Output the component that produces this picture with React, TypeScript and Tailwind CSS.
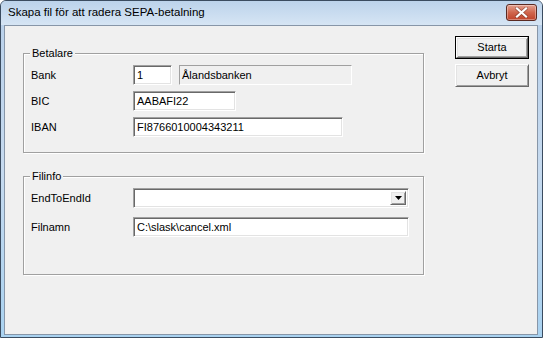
import React from "react";

const sunken =
  "border border-t-[#a0a0a0] border-l-[#a0a0a0] border-r-white border-b-white shadow-[inset_1px_1px_0_#696969,inset_-1px_-1px_0_#e3e3e3]";
const raised =
  "border border-t-white border-l-white border-r-[#696969] border-b-[#696969] shadow-[inset_1px_1px_0_#e3e3e3,inset_-1px_-1px_0_#a0a0a0]";

const Row = ({ label, children, className = "" }: { label: string; children: React.ReactNode; className?: string }) => (
  <div className={`flex items-center h-[20px] ${className}`}>
    <div className="w-[102px] shrink-0">{label}</div>
    {children}
  </div>
);

const Group = ({ title, className, children }: { title: string; className: string; children: React.ReactNode }) => (
  <div
    className={`relative w-[401px] border border-[#a0a0a0] shadow-[1px_1px_0_white,inset_1px_1px_0_white] pl-[7px] pt-[11px] ${className}`}
  >
    <span className="absolute left-[6px] -top-[7px] px-[2px] bg-[#f0f0f0] leading-[13px]">{title}</span>
    {children}
  </div>
);

export default function App() {
  return (
    <div className="w-[543px] h-[338px] flex flex-col border border-[#3b4c60] rounded-t-[6px] overflow-hidden bg-gradient-to-b from-[#b8d0ea] via-[#c6daef] to-[#a9d2f0] font-['Liberation_Sans',sans-serif] text-[11px] text-black">
      {/* title bar */}
      <div className="h-[24px] shrink-0 flex items-start justify-between pl-[7px] pr-[5px] bg-gradient-to-b from-[#bcd3eb] to-[#d6e5f4]">
        <span className="mt-[4px] text-[11.5px] leading-[15px] text-black">Skapa fil för att radera SEPA-betalning</span>
        <button className="mt-[3px] w-[31px] h-[17px] rounded-[3px] border border-[#5a2a22] bg-gradient-to-b from-[#e3a08f] via-[#d0664d] to-[#bf4229] shadow-[inset_0_0_0_1px_rgba(255,255,255,0.35)] flex items-center justify-center">
          <svg width="13" height="11" viewBox="0 0 13 11">
            <path
              d="M2 1.5 L11 9.5 M11 1.5 L2 9.5"
              stroke="#5a2a22"
              strokeWidth="3.6"
              strokeLinecap="square"
              opacity="0.5"
            />
            <path d="M2 1.5 L11 9.5 M11 1.5 L2 9.5" stroke="white" strokeWidth="2.2" strokeLinecap="square" />
          </svg>
        </button>
      </div>

      {/* client area */}
      <div className="flex-1 ml-[3px] mr-[4px] mb-[2px] border border-[#8796a8] bg-[#f0f0f0] flex pl-[18px] pt-[10px]">
        <div className="mt-[17px] flex flex-col">
          <Group title="Betalare" className="h-[100px]">
            <div className="flex flex-col gap-[6px]">
              <Row label="Bank">
                <div className={`w-[39px] h-[20px] bg-white ${sunken} pl-[3px] flex items-center`}>1</div>
                <div className="ml-[7px] w-[173px] h-[20px] border border-t-[#a0a0a0] border-l-[#a0a0a0] border-r-white border-b-white pl-[2px] flex items-center">
                  Ålandsbanken
                </div>
              </Row>
              <Row label="BIC">
                <div className={`w-[103px] h-[20px] bg-white ${sunken} pl-[3px] flex items-center`}>AABAFI22</div>
              </Row>
              <Row label="IBAN">
                <div className={`w-[210px] h-[20px] bg-white ${sunken} pl-[3px] flex items-center`}>FI8766010004343211</div>
              </Row>
            </div>
          </Group>

          <Group title="Filinfo" className="mt-[23px] h-[99px]">
            <div className="flex flex-col gap-[9px]">
              <Row label="EndToEndId">
                <div className={`w-[276px] h-[20px] bg-white ${sunken} flex justify-end p-[2px]`}>
                  <div className={`w-[16px] h-full bg-[#f0f0f0] ${raised} flex items-center justify-center`}>
                    <svg width="7" height="4" viewBox="0 0 7 4">
                      <path d="M0 0 H7 L3.5 4 Z" fill="black" />
                    </svg>
                  </div>
                </div>
              </Row>
              <Row label="Filnamn">
                <div className={`w-[276px] h-[20px] bg-white ${sunken} pl-[3px] flex items-center`}>C:\slask\cancel.xml</div>
              </Row>
            </div>
          </Group>
        </div>

        <div className="ml-[31px] flex flex-col gap-[5px]">
          <button className="w-[74px] h-[23px] border border-black bg-[#f0f0f0] p-0">
            <div className={`w-full h-full ${raised} flex items-center justify-center`}>Starta</div>
          </button>
          <button className={`w-[74px] h-[23px] bg-[#f0f0f0] ${raised} flex items-center justify-center`}>Avbryt</button>
        </div>
      </div>
    </div>
  );
}
